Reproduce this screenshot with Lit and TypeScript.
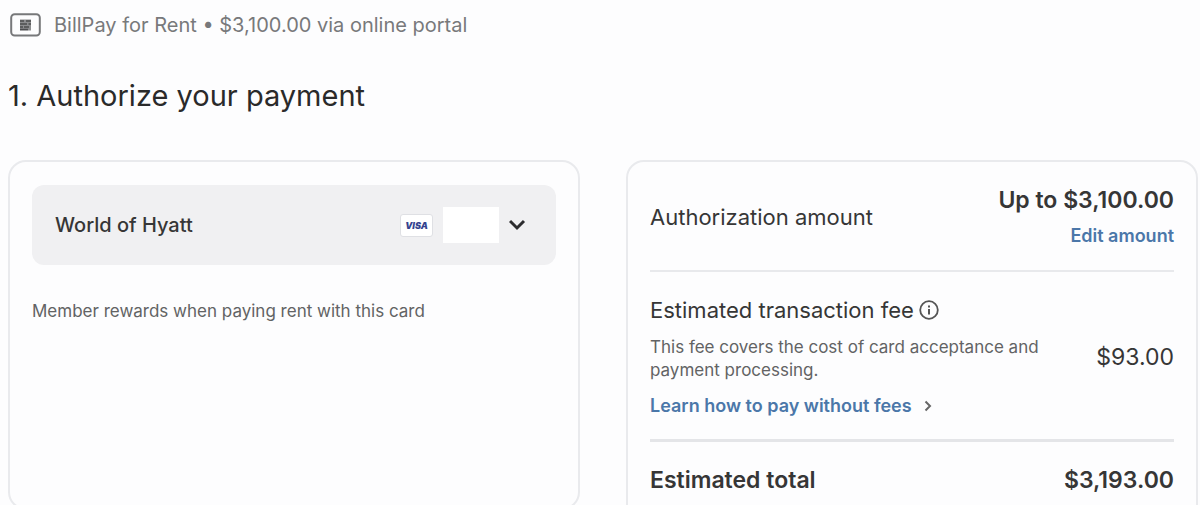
import { LitElement, html, css } from "lit";
import { customElement, state } from "lit/decorators.js";

@customElement("app-root")
export class AppRoot extends LitElement {
  @state() card = "World of Hyatt";

  static styles = css`
    :host {
      display: block;
      box-sizing: border-box;
      min-height: 100vh;
      padding: 11px 2px 0 8px;
      background: #fdfdfe;
      color: #363636;
      font-family: Inter, "Liberation Sans", sans-serif;
      font-size: 22px;
      line-height: 28px;
    }
    * { box-sizing: border-box; }
    svg { display: block; flex: none; }
    .summary {
      display: flex;
      align-items: center;
      gap: 12px;
      margin: 0;
      padding-left: 2px;
      color: #78797b;
      font-size: 20px;
    }
    h1 {
      margin: 37px 0 0;
      font-size: 29px;
      line-height: 40px;
      font-weight: 400;
      color: #2a2a2a;
    }
    .columns {
      display: grid;
      grid-template-columns: 1fr 1fr;
      align-items: start;
      gap: 46px;
      margin-top: 44px;
    }
    .panel {
      min-width: 0;
      min-height: 350px;
      padding: 23px 22px;
      border: 2px solid #e9eaed;
      border-radius: 18px;
    }
    .picker { display: grid; align-items: center; }
    .picker > * { grid-area: 1 / 1; }
    select {
      appearance: none;
      width: 100%;
      height: 80px;
      padding: 0 160px 0 23px;
      border: 0;
      border-radius: 12px;
      background: #f0f0f2;
      color: #363636;
      font: inherit;
      font-size: 20px;
      font-weight: 500;
    }
    .marks {
      display: flex;
      align-items: center;
      justify-self: end;
      gap: 10px;
      padding-right: 29px;
      pointer-events: none;
    }
    .art { width: 56px; height: 36px; background: #fff; }
    .visa {
      display: grid;
      place-items: center;
      width: 33px;
      height: 23px;
      border: 1px solid #dfe0e4;
      border-radius: 3px;
      background: #fff;
      color: #35438f;
      font-size: 9px;
      line-height: 9px;
      font-weight: 900;
      font-style: italic;
    }
    .note { margin: 35px 0 0; }
    .small { font-size: 17px; line-height: 23px; color: #626364; }
    .row {
      display: flex;
      align-items: center;
      justify-content: space-between;
      gap: 24px;
      padding: 24px 0 21px;
    }
    .row:first-child { padding: 1px 0 22px; }
    .row p { margin: 0; }
    .amount { text-align: right; }
    .amount, .details { display: grid; gap: 10px; }
    .details { justify-items: start; gap: 12px; }
    .value { font-size: 23px; }
    .strong { font-size: 23px; font-weight: 600; }
    a {
      color: #4b77a9;
      font-size: 18px;
      line-height: 24px;
      font-weight: 600;
      text-decoration: none;
    }
    hr { width: 100%; margin: 0; border: 0; background: #e4e5e8; }
    .thin { height: 2px; background: #e8e9ec; }
    .thick { height: 3px; }
    .title { display: flex; align-items: center; gap: 5px; }
    .info { padding: 0; border: 0; background: none; color: #555; }
    .learn { display: inline-flex; align-items: center; gap: 12px; }
  `;

  private pick(e: Event) {
    this.card = (e.target as HTMLSelectElement).value;
  }

  render() {
    return html`
      <p class="summary">
        <svg width="32" height="24" viewBox="0 0 32 24" fill="none">
          <rect x="1.2" y="1.2" width="28.6" height="21.4" rx="3.5" stroke="#77787a" stroke-width="2" />
          <path d="M10 6.500h11v11H10z" fill="#8c8d8f" />
          <path d="M10 8h4M16 8h5M10 11h7M18.500 11h2.500M10 14h3M14 14h5M10 16.500h8" stroke="#4c4d4f" stroke-width="1.6" />
        </svg>
        <span>BillPay for Rent • $3,100.00 via online portal</span>
      </p>
      <h1>1. Authorize your payment</h1>
      <main class="columns">
        <section class="panel">
          <div class="picker">
            <select aria-label="Payment card" .value=${this.card} @change=${this.pick}>
              <option>World of Hyatt</option>
            </select>
            <div class="marks">
              <span class="visa">VISA</span>
              <span class="art"></span>
              <svg width="18" height="12" viewBox="0 0 18 12" fill="none">
                <path d="M1 2l7 7 7-7" stroke="#2c2c2e" stroke-width="3" />
              </svg>
            </div>
          </div>
          <p class="note small">Member rewards when paying rent with this card</p>
        </section>
        <section class="panel">
          <div class="row">
            <p>Authorization amount</p>
            <div class="amount">
              <p class="strong">Up to $3,100.00</p>
              <a href="#edit">Edit amount</a>
            </div>
          </div>
          <hr class="thin" />
          <div class="row">
            <div class="details">
              <div class="title">
                <span>Estimated transaction fee</span>
                <button class="info" aria-label="About the transaction fee">
                  <svg width="20" height="20" viewBox="0 0 20 20" fill="none" stroke="currentColor">
                    <circle cx="10" cy="10" r="8.8" stroke-width="1.8" />
                    <path d="M10 9v5.500M10 5.500v2" stroke-width="2" />
                  </svg>
                </button>
              </div>
              <p class="small">This fee covers the cost of card acceptance and payment processing.</p>
              <a class="learn" href="#fees">Learn how to pay without fees
                <svg width="8" height="12" viewBox="0 0 8 12" fill="none">
                  <path d="M1.500 1.500L6 6l-4.500 4.500" stroke="#666" stroke-width="2" />
                </svg>
              </a>
            </div>
            <p class="value">$93.00</p>
          </div>
          <hr class="thick" />
          <div class="row strong">
            <p>Estimated total</p>
            <p>$3,193.00</p>
          </div>
        </section>
      </main>
    `;
  }
}
